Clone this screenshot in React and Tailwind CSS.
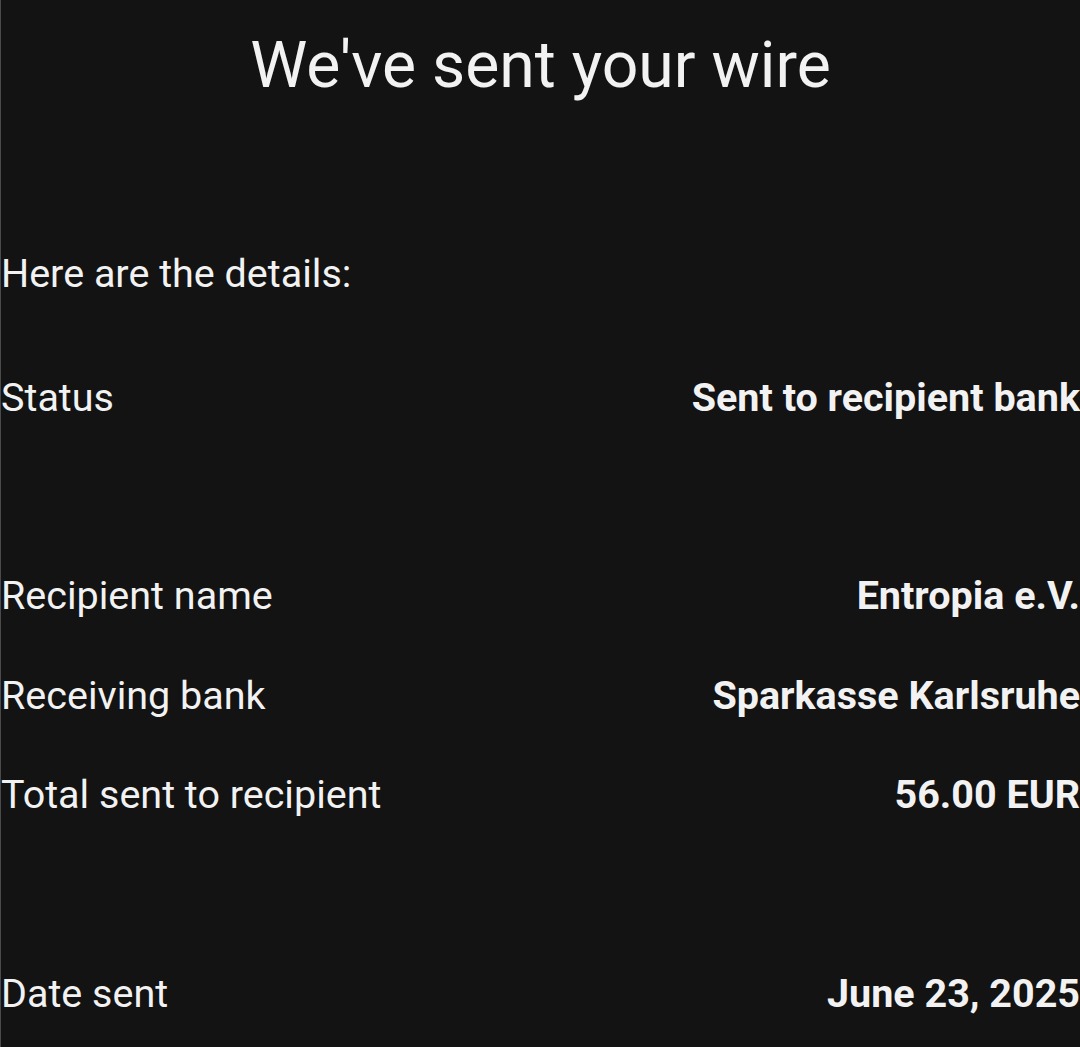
const rows = [
  { label: 'Status', value: 'Sent to recipient bank' },
  null,
  { label: 'Recipient name', value: 'Entropia e.V.' },
  { label: 'Receiving bank', value: 'Sparkasse Karlsruhe' },
  { label: 'Total sent to recipient', value: '56.00 EUR' },
  null,
  { label: 'Date sent', value: 'June 23, 2025' },
]

export default function App() {
  return (
    <div
      className="h-[1047px] w-[1080px] overflow-hidden border-l border-[#4a4a4a] bg-[#131313] text-[#f2f2f2]"
      style={{ fontFamily: 'Roboto, sans-serif' }}
    >
      {/* Heading */}
      <div className="flex h-[131px] items-center justify-center">
        <h1 className="text-[64.3px] font-normal leading-none">We've sent your wire</h1>
      </div>

      <div className="mt-[93px] flex h-[99px] items-center">
        <p className="text-[39.5px] leading-none">Here are the details:</p>
      </div>

      <div className="mt-[25px] flex flex-col">
        {rows.map((row, i) =>
          row ? (
            <div key={i} className="flex h-[99.3px] items-center justify-between text-[39.5px] leading-none">
              <span>{row.label}</span>
              <span className="font-bold">{row.value}</span>
            </div>
          ) : (
            <div key={i} className="h-[99.3px]" />
          )
        )}
      </div>
    </div>
  )
}
